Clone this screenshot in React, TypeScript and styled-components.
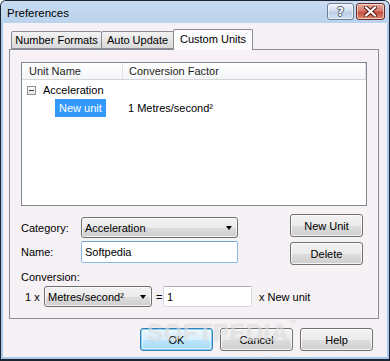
import React from "react";
import styled, { createGlobalStyle } from "styled-components";

const Global = createGlobalStyle`
  html, body { margin: 0; padding: 0; background: #fff; }
  body {
    font-family: "Liberation Sans", Arial, sans-serif;
    font-size: 11px;
    color: #000;
  }
  #root { width: 390px; height: 361px; }
  * { box-sizing: border-box; }
`;

const Window = styled.div`
  position: relative;
  width: 390px;
  height: 361px;
  border: 1px solid #1b2430;
  border-bottom-width: 2px;
  border-radius: 6px 6px 0 0;
  background: #a8c9ec;
  padding: 0 2px 2px 2px;
  display: flex;
  flex-direction: column;
  overflow: hidden;
`;

const TitleBar = styled.div`
  height: 22px;
  margin: 0 -2px;
  padding: 2px 4px 0 6px;
  display: flex;
  align-items: flex-start;
  justify-content: space-between;
  background: linear-gradient(#c8dcf2, #bad2ec);
`;

const Title = styled.div`
  padding-top: 4px;
  font-size: 11.5px;
  line-height: 13px;
  color: #000;
`;

const Caption = styled.div`
  display: flex;
  gap: 2px;
`;

const CaptionButton = styled.div<{ $close?: boolean }>`
  width: ${(p) => (p.$close ? 29 : 27)}px;
  height: 17px;
  border: 1px solid ${(p) => (p.$close ? "#6b2c26" : "#6f7e92")};
  border-radius: 3px;
  background: ${(p) =>
    p.$close
      ? "linear-gradient(#e6aa9e, #d57a6b 48%, #c24b3a 52%, #d98a70)"
      : "linear-gradient(#eef4fb, #d3e0f0 48%, #bccfe6 52%, #d0e0f2)"};
  box-shadow: inset 0 0 0 1px rgba(255, 255, 255, 0.55);
  display: flex;
  align-items: center;
  justify-content: center;
`;

const HelpGlyph = styled.span`
  font-family: "DejaVu Sans", sans-serif;
  font-weight: bold;
  font-size: 12px;
  line-height: 12px;
  color: #fff;
  text-shadow: 1px 0 0 #4d5a6c, -1px 0 0 #4d5a6c, 0 1px 0 #4d5a6c, 0 -1px 0 #4d5a6c;
`;

const Body = styled.div`
  flex: 1;
  background: #f5f1f5;
  padding: 6px 8px 0 6px;
  display: flex;
  flex-direction: column;
`;

const TabStrip = styled.div`
  height: 20px;
  display: flex;
  align-items: flex-end;
  padding-left: 2px;
  position: relative;
  z-index: 1;
`;

const Tab = styled.div<{ $active?: boolean; $w: number }>`
  width: ${(p) => p.$w}px;
  height: ${(p) => (p.$active ? 21 : 18)}px;
  margin-left: -1px;
  margin-bottom: ${(p) => (p.$active ? -1 : 0)}px;
  border: 1px solid #898c95;
  border-bottom: ${(p) => (p.$active ? "none" : "1px solid #898c95")};
  border-radius: 2px 2px 0 0;
  background: ${(p) =>
    p.$active ? "#fcfbfd" : "linear-gradient(#f3f3f3, #e6e6e6 50%, #d9d9d9)"};
  display: flex;
  align-items: center;
  justify-content: center;
  padding-bottom: ${(p) => (p.$active ? 2 : 0)}px;
  white-space: nowrap;
  &:first-child { margin-left: 0; }
`;

const Panel = styled.div`
  height: 270px;
  border: 1px solid #898c95;
  background: #f5f1f5;
  padding: 12px 11px 11px 11px;
  display: flex;
  flex-direction: column;
`;

const ListView = styled.div`
  height: 144px;
  border: 1px solid #828790;
  background: #fff;
  display: flex;
  flex-direction: column;
`;

const Header = styled.div`
  height: 17px;
  display: flex;
  background: linear-gradient(#ffffff, #f4f5f8);
  border-bottom: 1px solid #d5d5d5;
`;

const HeaderCell = styled.div<{ $w?: number }>`
  ${(p) => (p.$w ? `width: ${p.$w}px;` : "flex: 1;")}
  padding-left: ${(p) => (p.$w ? 7 : 6)}px;
  border-right: 1px solid #e0e3e8;
  display: flex;
  align-items: center;
  color: #1e1e1e;
`;

const Rows = styled.div`
  padding-top: 1px;
  display: flex;
  flex-direction: column;
`;

const Row = styled.div`
  height: 18px;
  display: flex;
  align-items: center;
`;

const TreeCell = styled.div<{ $indent: number }>`
  width: 101px;
  padding-left: ${(p) => p.$indent}px;
  display: flex;
  align-items: center;
  gap: 7px;
  white-space: nowrap;
`;

const Expander = styled.div`
  width: 9px;
  height: 9px;
  border: 1px solid #8f8f8f;
  background: linear-gradient(#ffffff, #e6e6e6);
  display: flex;
  align-items: center;
  justify-content: center;
  margin-top: 1px;
  &::after {
    content: "";
    width: 5px;
    height: 1px;
    background: #2b3a55;
  }
`;

const Selected = styled.span`
  background: #3399ff;
  color: #fff;
  height: 18px;
  line-height: 18px;
  padding: 0 4px;
`;

const ValueCell = styled.div`
  padding-left: 5px;
  white-space: nowrap;
`;

const FormArea = styled.div`
  margin-top: 8px;
  display: flex;
`;

const FormCol = styled.div`
  flex: 1;
  padding-top: 3px;
  display: flex;
  flex-direction: column;
  gap: 3px;
`;

const FieldRow = styled.div`
  display: flex;
  align-items: center;
`;

const Label = styled.div`
  width: 60px;
  white-space: nowrap;
`;

const Combo = styled.div<{ $w: number }>`
  width: ${(p) => p.$w}px;
  height: 21px;
  border: 1px solid #707070;
  border-radius: 3px;
  background: linear-gradient(#f2f2f2, #ebebeb 50%, #dddddd 51%, #cfcfcf);
  box-shadow: inset 0 0 0 1px rgba(255, 255, 255, 0.7);
  display: flex;
  align-items: center;
  justify-content: space-between;
  padding: 0 4px 0 3px;
  white-space: nowrap;
  &::after {
    content: "";
    border-left: 3.5px solid transparent;
    border-right: 3.5px solid transparent;
    border-top: 4px solid #000;
    margin-right: 1px;
  }
`;

const TextBox = styled.div<{ $w: number; $h: number; $focus?: boolean }>`
  width: ${(p) => p.$w}px;
  height: ${(p) => p.$h}px;
  border: 1px solid ${(p) => (p.$focus ? "#8ab8e2" : "#d6d9de")};
  border-top-color: ${(p) => (p.$focus ? "#6fa5d6" : "#abadb3")};
  border-radius: 2px;
  background: #fff;
  display: flex;
  align-items: center;
  padding-left: 3px;
`;

const ButtonCol = styled.div`
  width: 73px;
  margin-right: 4px;
  display: flex;
  flex-direction: column;
  gap: 5px;
`;

const Button = styled.div<{ $default?: boolean }>`
  width: 73px;
  height: 23px;
  border: 1px solid ${(p) => (p.$default ? "#3c7fb1" : "#707070")};
  border-radius: 3px;
  background: ${(p) =>
    p.$default
      ? "linear-gradient(#eaf6fd, #d9f0fc 50%, #bee6fd 51%, #a7d9f5)"
      : "linear-gradient(#f2f2f2, #ebebeb 50%, #dddddd 51%, #cfcfcf)"};
  box-shadow: ${(p) =>
    p.$default
      ? "inset 0 0 0 1px #7fd0f4, inset 0 0 0 2px rgba(255,255,255,0.5)"
      : "inset 0 0 0 1px rgba(255, 255, 255, 0.75)"};
  display: flex;
  align-items: center;
  justify-content: center;
`;

const SectionLabel = styled.div`
  margin-top: 5px;
  height: 14px;
  line-height: 14px;
`;

const ConversionRow = styled.div`
  margin-top: 2px;
  height: 21px;
  display: flex;
  align-items: center;
`;

const Inline = styled.span<{ $w?: number; $pl?: number }>`
  ${(p) => (p.$w ? `width: ${p.$w}px;` : "")}
  padding-left: ${(p) => p.$pl ?? 0}px;
  white-space: nowrap;
`;

const DialogButtons = styled.div`
  margin-top: 9px;
  padding-right: 6px;
  display: flex;
  justify-content: flex-end;
  gap: 7px;
`;

const Watermark = styled.div`
  position: absolute;
  left: 146px;
  top: 318px;
  font-family: "Liberation Sans", Arial, sans-serif;
  font-weight: bold;
  font-size: 24px;
  letter-spacing: 0.5px;
  color: rgba(255, 255, 255, 0.55);
  text-shadow: 0 0 1px rgba(0, 0, 0, 0.18);
  pointer-events: none;
  & sup { font-size: 8px; vertical-align: top; }
`;

const WatermarkUrl = styled.div`
  position: absolute;
  left: 233px;
  top: 354px;
  font-size: 9px;
  color: rgba(255, 255, 255, 0.5);
  text-shadow: 0 0 1px rgba(0, 0, 0, 0.2);
  pointer-events: none;
`;

export default function App() {
  return (
    <>
      <Global />
      <Window>
        <TitleBar>
          <Title>Preferences</Title>
          <Caption>
            <CaptionButton>
              <HelpGlyph>?</HelpGlyph>
            </CaptionButton>
            <CaptionButton $close>
              <svg width="13" height="11" viewBox="0 0 13 11">
                <path d="M2 1.5 L11 9.5 M11 1.5 L2 9.5" stroke="#5a1e18" strokeWidth="4" strokeLinecap="square" />
                <path d="M2 1.5 L11 9.5 M11 1.5 L2 9.5" stroke="#fff" strokeWidth="2" strokeLinecap="square" />
              </svg>
            </CaptionButton>
          </Caption>
        </TitleBar>
        <Body>
          <TabStrip>
            <Tab $w={91}>Number Formats</Tab>
            <Tab $w={73}>Auto Update</Tab>
            <Tab $w={80} $active>Custom Units</Tab>
          </TabStrip>
          <Panel>
            <ListView>
              <Header>
                <HeaderCell $w={101}>Unit Name</HeaderCell>
                <HeaderCell>Conversion Factor</HeaderCell>
              </Header>
              <Rows>
                <Row>
                  <TreeCell $indent={5}>
                    <Expander />
                    <span>Acceleration</span>
                  </TreeCell>
                </Row>
                <Row>
                  <TreeCell $indent={33}>
                    <Selected>New unit</Selected>
                  </TreeCell>
                  <ValueCell>1 Metres/second²</ValueCell>
                </Row>
              </Rows>
            </ListView>
            <FormArea>
              <FormCol>
                <FieldRow>
                  <Label>Category:</Label>
                  <Combo $w={157}>Acceleration</Combo>
                </FieldRow>
                <FieldRow>
                  <Label>Name:</Label>
                  <TextBox $w={157} $h={22} $focus>Softpedia</TextBox>
                </FieldRow>
              </FormCol>
              <ButtonCol>
                <Button>New Unit</Button>
                <Button>Delete</Button>
              </ButtonCol>
            </FormArea>
            <SectionLabel>Conversion:</SectionLabel>
            <ConversionRow>
              <Inline $w={23} $pl={4}>1 x</Inline>
              <Combo $w={108}>Metres/second²</Combo>
              <Inline $w={11} $pl={4}>=</Inline>
              <TextBox $w={89} $h={21}>1</TextBox>
              <Inline $pl={7}>x New unit</Inline>
            </ConversionRow>
          </Panel>
          <DialogButtons>
            <Button $default>OK</Button>
            <Button>Cancel</Button>
            <Button>Help</Button>
          </DialogButtons>
        </Body>
        <Watermark>
          SOFTPEDIA<sup>™</sup>
        </Watermark>
        <WatermarkUrl>www.softpedia.com</WatermarkUrl>
      </Window>
    </>
  );
}
